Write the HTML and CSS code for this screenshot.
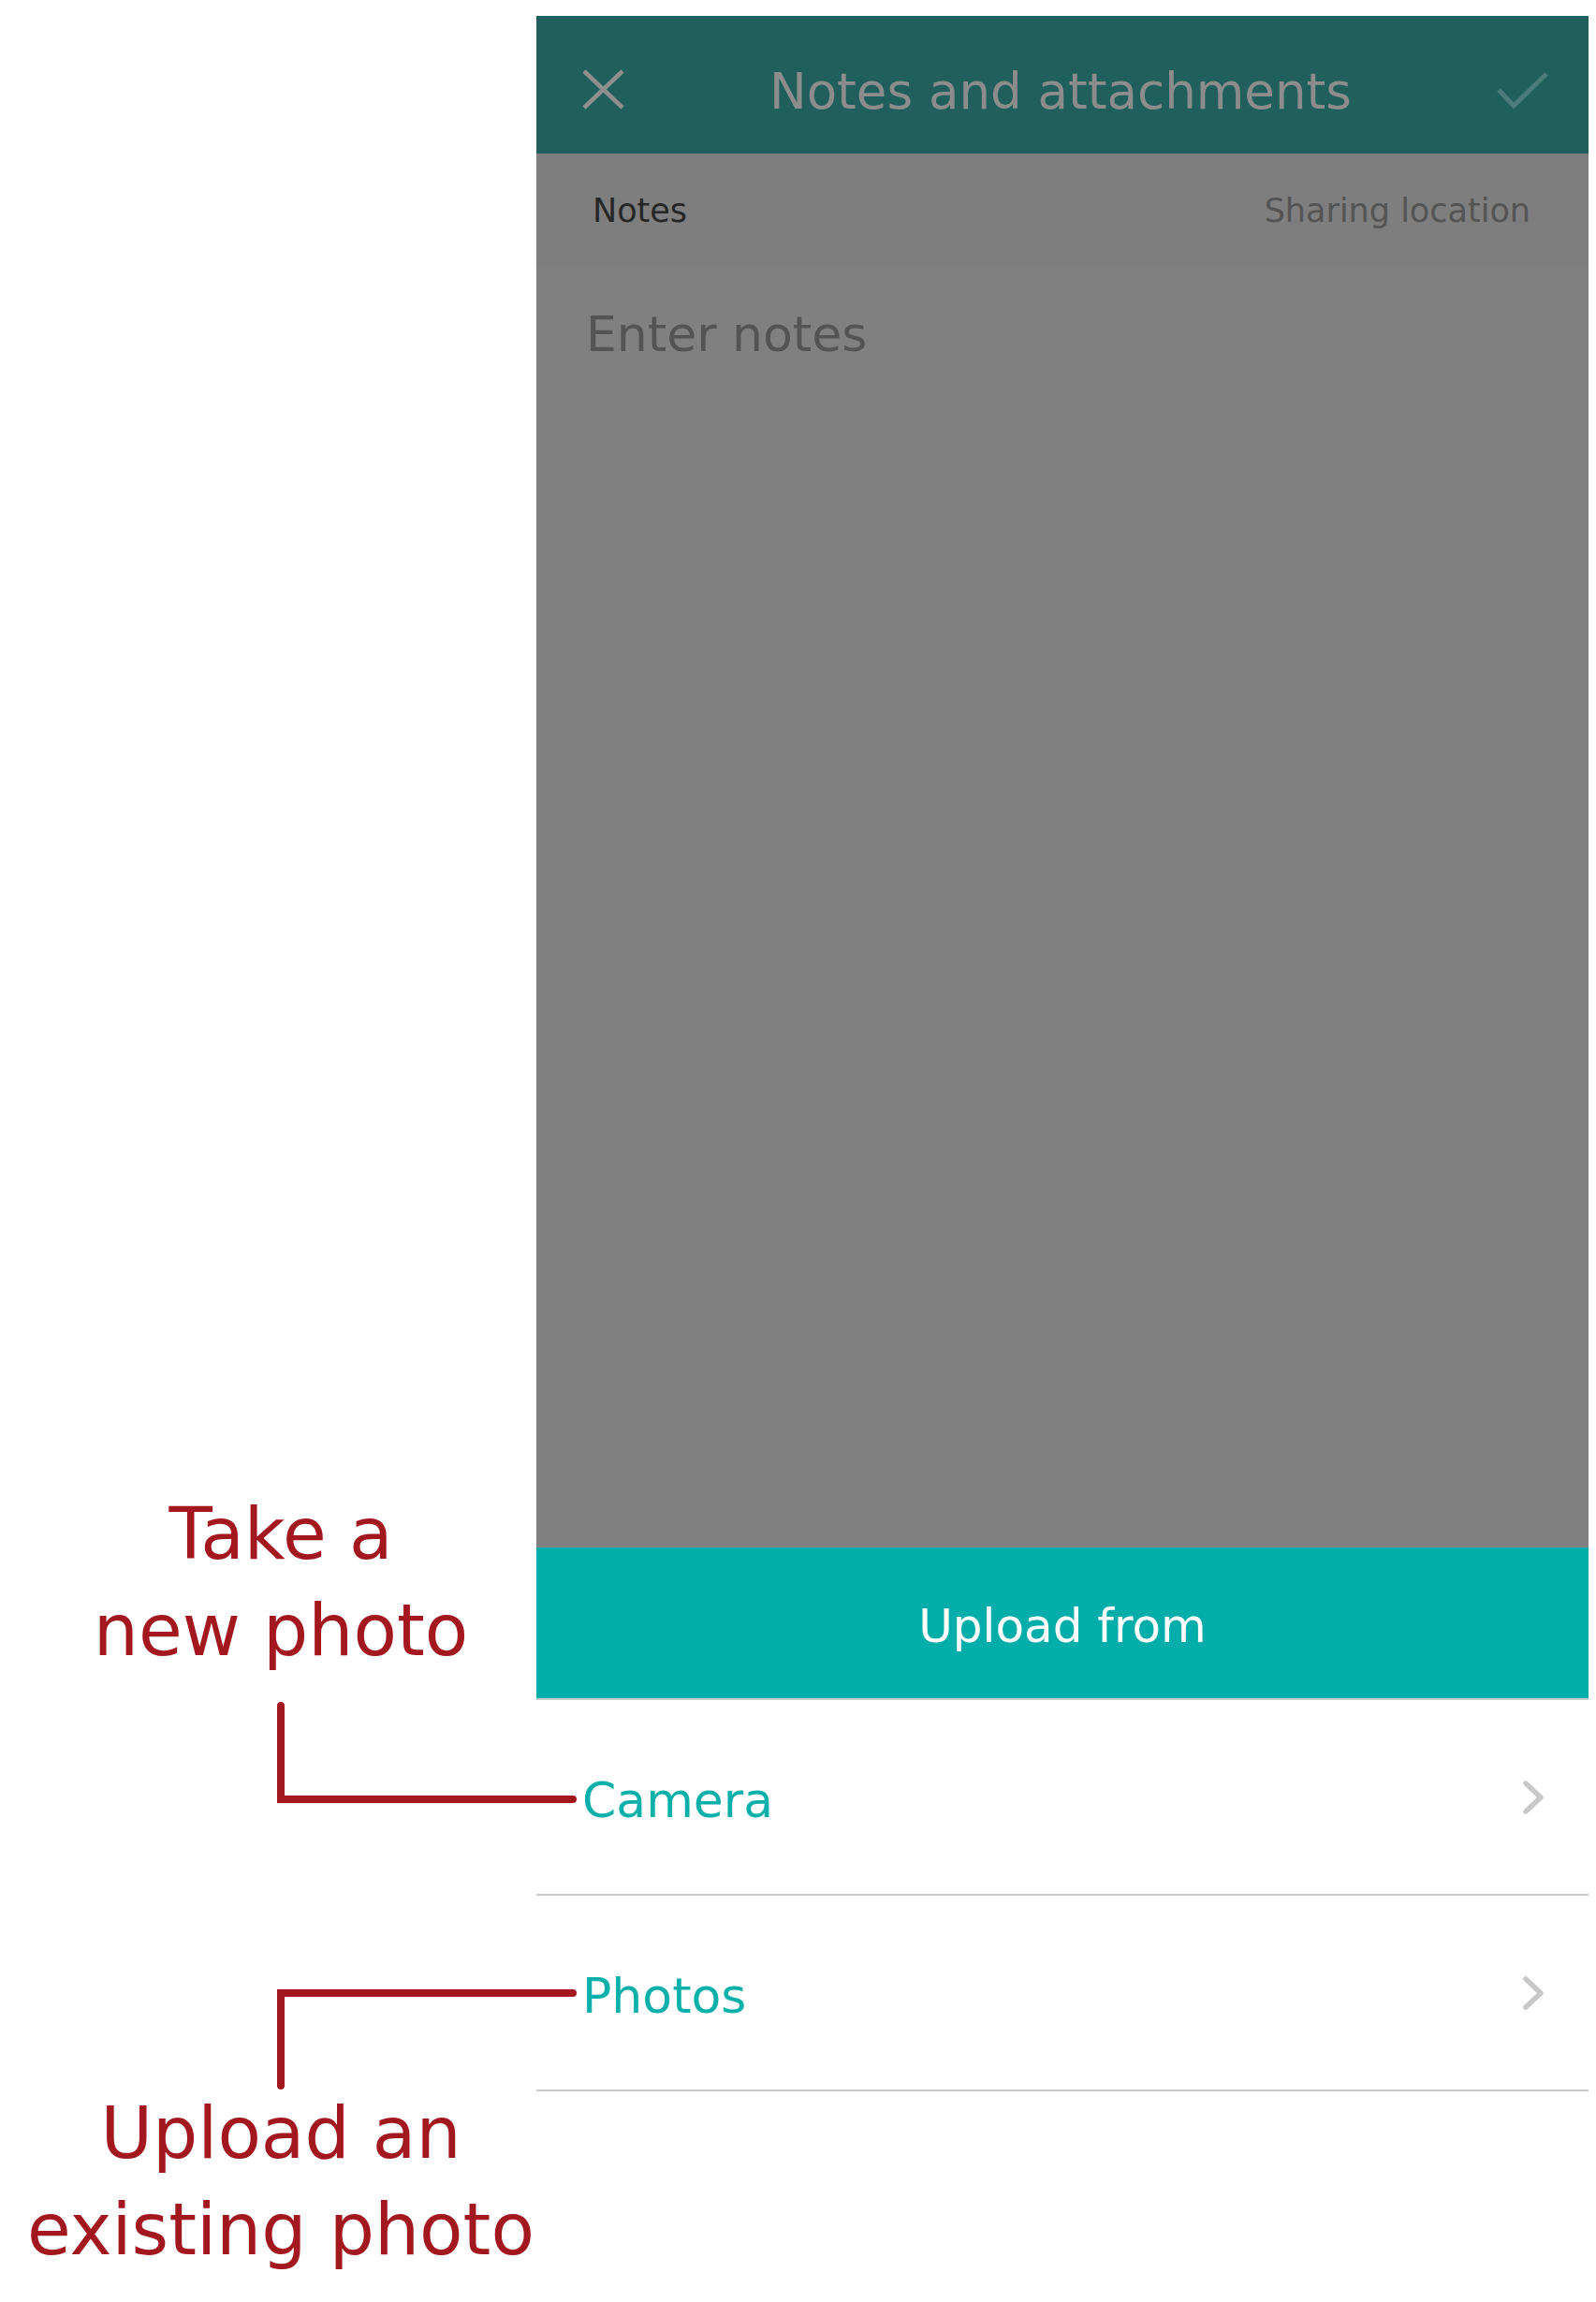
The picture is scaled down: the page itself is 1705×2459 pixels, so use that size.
FILE: index.html
```html
<!DOCTYPE html>
<html lang="en">
<head>
<meta charset="utf-8">
<title>Notes and attachments</title>
<link rel="stylesheet" href="styles.css">
</head>
<body>
<div class="page">
  <aside class="notes-col">
    <div class="callout callout-camera">Take a<br>new photo</div>
    <div class="callout callout-photos">Upload an<br>existing photo</div>
  </aside>

  <main class="phone">
    <header class="topbar">
      <svg class="icon-close" width="45" height="43" viewBox="0 0 45 43" aria-hidden="true">
        <path d="M2 2 L43 41 M43 2 L2 41" fill="none" stroke="#8f8f8f" stroke-width="4.5" stroke-linecap="butt"/>
      </svg>
      <h1 class="title">Notes and attachments</h1>
      <svg class="icon-check" width="55" height="40" viewBox="0 0 55 40" aria-hidden="true">
        <path d="M2 19 L18 36 L53 2" fill="none" stroke="#4a7b78" stroke-width="5"/>
      </svg>
    </header>

    <div class="tabs">
      <span class="tab tab-active">Notes</span>
      <span class="tab tab-muted">Sharing location</span>
    </div>

    <div class="editor">
      <div class="placeholder">Enter notes</div>
    </div>

    <div class="sheet-head">Upload from</div>

    <ul class="options">
      <li class="option">
        <span class="option-label">Camera</span>
        <svg class="chev" width="24" height="38" viewBox="0 0 24 38" aria-hidden="true">
          <path d="M4 4 L20 19 L4 34" fill="none" stroke="#c8c8c8" stroke-width="5.5" stroke-linecap="round" stroke-linejoin="round"/>
        </svg>
      </li>
      <li class="option">
        <span class="option-label">Photos</span>
        <svg class="chev" width="24" height="38" viewBox="0 0 24 38" aria-hidden="true">
          <path d="M4 4 L20 19 L4 34" fill="none" stroke="#c8c8c8" stroke-width="5.5" stroke-linecap="round" stroke-linejoin="round"/>
        </svg>
      </li>
    </ul>
  </main>

  <svg class="connectors" width="1705" height="2459" viewBox="0 0 1705 2459" aria-hidden="true">
    <path d="M300 1822 L300 1922 L612 1922" fill="none" stroke="#a3171f" stroke-width="8" stroke-linecap="round"/>
    <path d="M612 2129 L300 2129 L300 2228" fill="none" stroke="#a3171f" stroke-width="8" stroke-linecap="round"/>
  </svg>
</div>
</body>
</html>
```

FILE: styles.css
```css
html, body {
  margin: 0;
  padding: 0;
  background: #ffffff;
}

body {
  font-family: "DejaVu Sans", "Liberation Sans", sans-serif;
  width: 1705px;
  height: 2459px;
  overflow: hidden;
}

.page {
  position: relative;
  display: grid;
  grid-template-columns: 573px 1124px;
  padding-top: 17px;
  width: 1705px;
  height: 2459px;
  box-sizing: border-box;
}

/* ---------- annotations ---------- */
.notes-col {
  display: flex;
  flex-direction: column;
}

.callout {
  width: 600px;
  text-align: center;
  color: #a3171f;
  font-size: 76px;
  line-height: 103px;
  white-space: nowrap;
}

.callout-camera {
  margin-top: 1570px;
}

.callout-photos {
  margin-top: 434px;
}

.connectors {
  position: absolute;
  left: 0;
  top: 0;
  pointer-events: none;
}

/* ---------- phone ---------- */
.phone {
  display: flex;
  flex-direction: column;
  width: 1124px;
}

.topbar {
  height: 147px;
  background: #215f5d;
  display: flex;
  align-items: center;
  justify-content: space-between;
  padding: 0 43px 0 49px;
  box-sizing: border-box;
}

.icon-close {
  margin-top: 10px;
}

.icon-check {
  margin-top: 12px;
}

.title {
  margin: 14px 0 0 0;
  font-size: 53px;
  font-weight: normal;
  color: #8c8c8c;
  white-space: nowrap;
}

.tabs {
  height: 119px;
  background: #7e7e7e;
  display: flex;
  align-items: center;
  justify-content: space-between;
  padding: 2px 62px 0 60px;
  box-sizing: border-box;
  font-size: 35px;
}

.tab-active {
  color: #262626;
}

.tab-muted {
  color: #545454;
}

.editor {
  height: 1370px;
  background: #808080;
  padding: 44px 0 0 53px;
  box-sizing: border-box;
}

.placeholder {
  font-size: 52px;
  color: #545454;
}

.sheet-head {
  height: 163px;
  background: #03ada9;
  border-bottom: 2px solid #c9c9c9;
  box-sizing: border-box;
  display: flex;
  align-items: center;
  justify-content: center;
  color: #ffffff;
  font-size: 50px;
  padding-top: 6px;
}

.options {
  list-style: none;
  margin: 0;
  padding: 0;
  background: #ffffff;
}

.option {
  height: 209px;
  box-sizing: border-box;
  border-bottom: 2px solid #cacaca;
  display: flex;
  align-items: center;
  justify-content: space-between;
  padding: 0 47px 0 49px;
}

.option-label {
  font-size: 52px;
  color: #0cb0aa;
  margin-top: 6px;
}
```
